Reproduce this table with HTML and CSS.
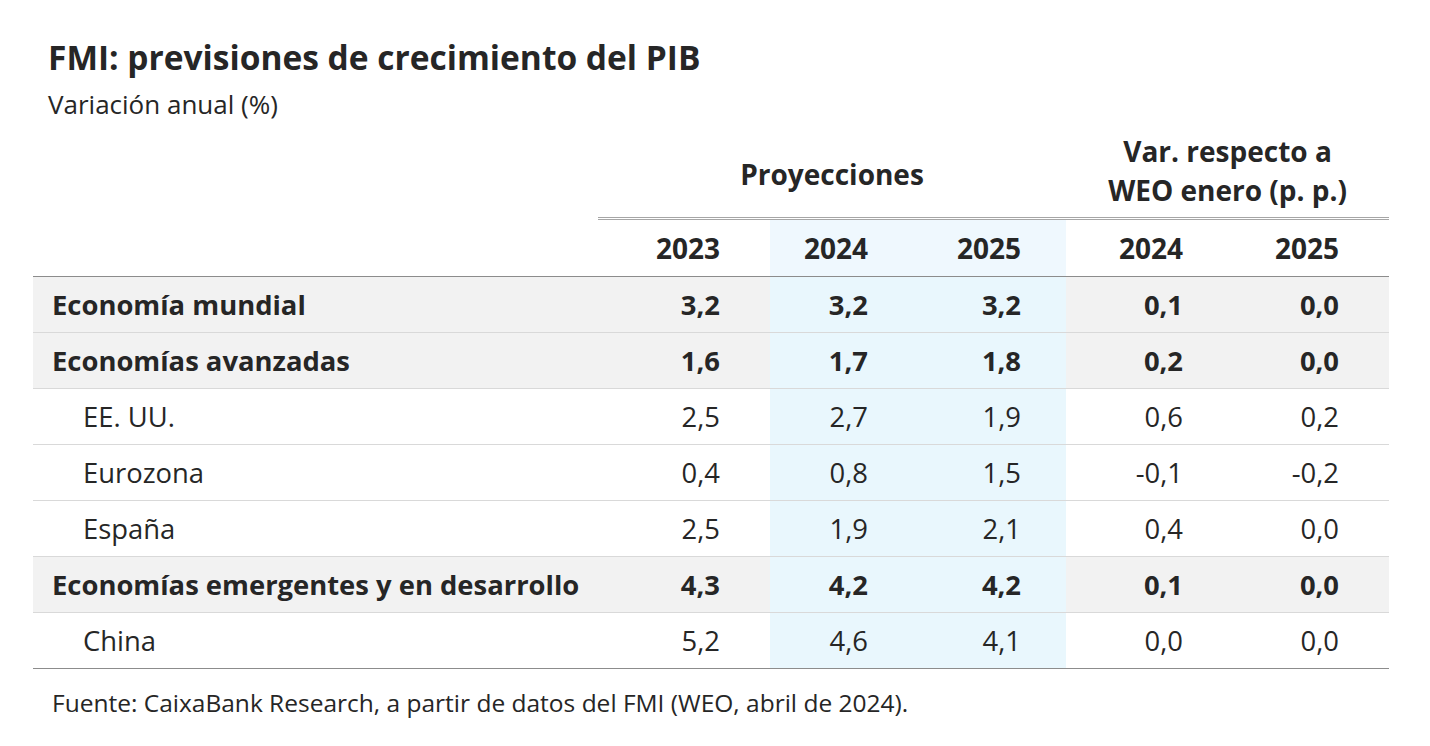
FILE: index.html
```html
<!DOCTYPE html>
<html lang="es">
<head>
<meta charset="utf-8">
<title>FMI: previsiones de crecimiento del PIB</title>
<link rel="stylesheet" href="styles.css">
</head>
<body>
<div class="page">
  <h1 class="title">FMI: previsiones de crecimiento del PIB</h1>
  <div class="subtitle">Variación anual (%)</div>
  <table class="tbl">
    <colgroup>
      <col class="c-label">
      <col class="c-2023">
      <col class="c-2024">
      <col class="c-2025">
      <col class="c-v24">
      <col class="c-v25">
    </colgroup>
    <thead>
      <tr class="grp">
        <th></th>
        <th colspan="3" class="grp-cell grp-proj">Proyecciones</th>
        <th colspan="2" class="grp-cell">Var. respecto a<br>WEO enero (p. p.)</th>
      </tr>
      <tr class="years">
        <th></th>
        <th class="num">2023</th>
        <th class="num hl">2024</th>
        <th class="num hl pr45">2025</th>
        <th class="num pr45">2024</th>
        <th class="num">2025</th>
      </tr>
    </thead>
    <tbody>
      <tr class="bold">
        <td class="label">Economía mundial</td>
        <td class="num">3,2</td><td class="num hl">3,2</td><td class="num hl pr45">3,2</td><td class="num pr45">0,1</td><td class="num">0,0</td>
      </tr>
      <tr class="bold">
        <td class="label">Economías avanzadas</td>
        <td class="num">1,6</td><td class="num hl">1,7</td><td class="num hl pr45">1,8</td><td class="num pr45">0,2</td><td class="num">0,0</td>
      </tr>
      <tr>
        <td class="label sub">EE. UU.</td>
        <td class="num">2,5</td><td class="num hl">2,7</td><td class="num hl pr45">1,9</td><td class="num pr45">0,6</td><td class="num">0,2</td>
      </tr>
      <tr>
        <td class="label sub">Eurozona</td>
        <td class="num">0,4</td><td class="num hl">0,8</td><td class="num hl pr45">1,5</td><td class="num pr45">-0,1</td><td class="num">-0,2</td>
      </tr>
      <tr>
        <td class="label sub">España</td>
        <td class="num">2,5</td><td class="num hl">1,9</td><td class="num hl pr45">2,1</td><td class="num pr45">0,4</td><td class="num">0,0</td>
      </tr>
      <tr class="bold">
        <td class="label">Economías emergentes y en desarrollo</td>
        <td class="num">4,3</td><td class="num hl">4,2</td><td class="num hl pr45">4,2</td><td class="num pr45">0,1</td><td class="num">0,0</td>
      </tr>
      <tr class="last">
        <td class="label sub">China</td>
        <td class="num">5,2</td><td class="num hl">4,6</td><td class="num hl pr45">4,1</td><td class="num pr45">0,0</td><td class="num">0,0</td>
      </tr>
    </tbody>
  </table>
  <div class="source">Fuente: CaixaBank Research, a partir de datos del FMI (WEO, abril de 2024).</div>
</div>
</body>
</html>
```
FILE: styles.css
```css
html, body {
  margin: 0;
  padding: 0;
  background: #ffffff;
}
body {
  font-family: "Open Sans", "Lato", sans-serif;
  color: #262626;
}
.page {
  padding: 30px 41px 0 33px;
  width: 1356px;
}
.title {
  margin: 0 0 0 15px;
  font-size: 33.5px;
  font-weight: 700;
  line-height: 54px;
  color: #262626;
}
.subtitle {
  margin: 0 0 0 15px;
  font-size: 26px;
  line-height: 40px;
}
.tbl {
  border-collapse: collapse;
  table-layout: fixed;
  width: 1356px;
  margin-top: 0;
}
.c-label { width: 565px; }
.c-2023 { width: 172px; }
.c-2024 { width: 148px; }
.c-2025 { width: 148px; }
.c-v24 { width: 162px; }
.c-v25 { width: 161px; }

.tbl th, .tbl td {
  padding: 0;
}
.grp th {
  height: 86px;
  vertical-align: middle;
  font-weight: 700;
  font-size: 28px;
  line-height: 39px;
}
.grp-cell {
  text-align: center;
  border-bottom: 3px double #a6a6a6;
}
.grp-proj {
  padding-top: 7px !important;
}
.years th {
  height: 56px;
  font-size: 28px;
  font-weight: 700;
  border-bottom: 1px solid #8c8c8c;
}
.num {
  text-align: right;
  padding-right: 50px !important;
}
.pr45 {
  padding-right: 45px !important;
}
.years th.hl { background: #eff8fe; }
.tbl td {
  height: 55px;
  font-size: 27.4px;
  border-bottom: 1px solid #d9d9d9;
  vertical-align: middle;
}
.tbl tr.bold td {
  background: #f2f2f2;
  font-weight: 700;
}
.tbl td.hl,
.tbl tr.bold td.hl {
  background: #e9f7fd;
}
.tbl tr.last td {
  border-bottom: 1px solid #8c8c8c;
}
.label {
  padding-left: 19px !important;
  text-align: left;
}
.label.sub {
  padding-left: 50px !important;
}
.source {
  margin: 14px 0 0 19px;
  font-size: 24.5px;
  line-height: 40px;
}
```
